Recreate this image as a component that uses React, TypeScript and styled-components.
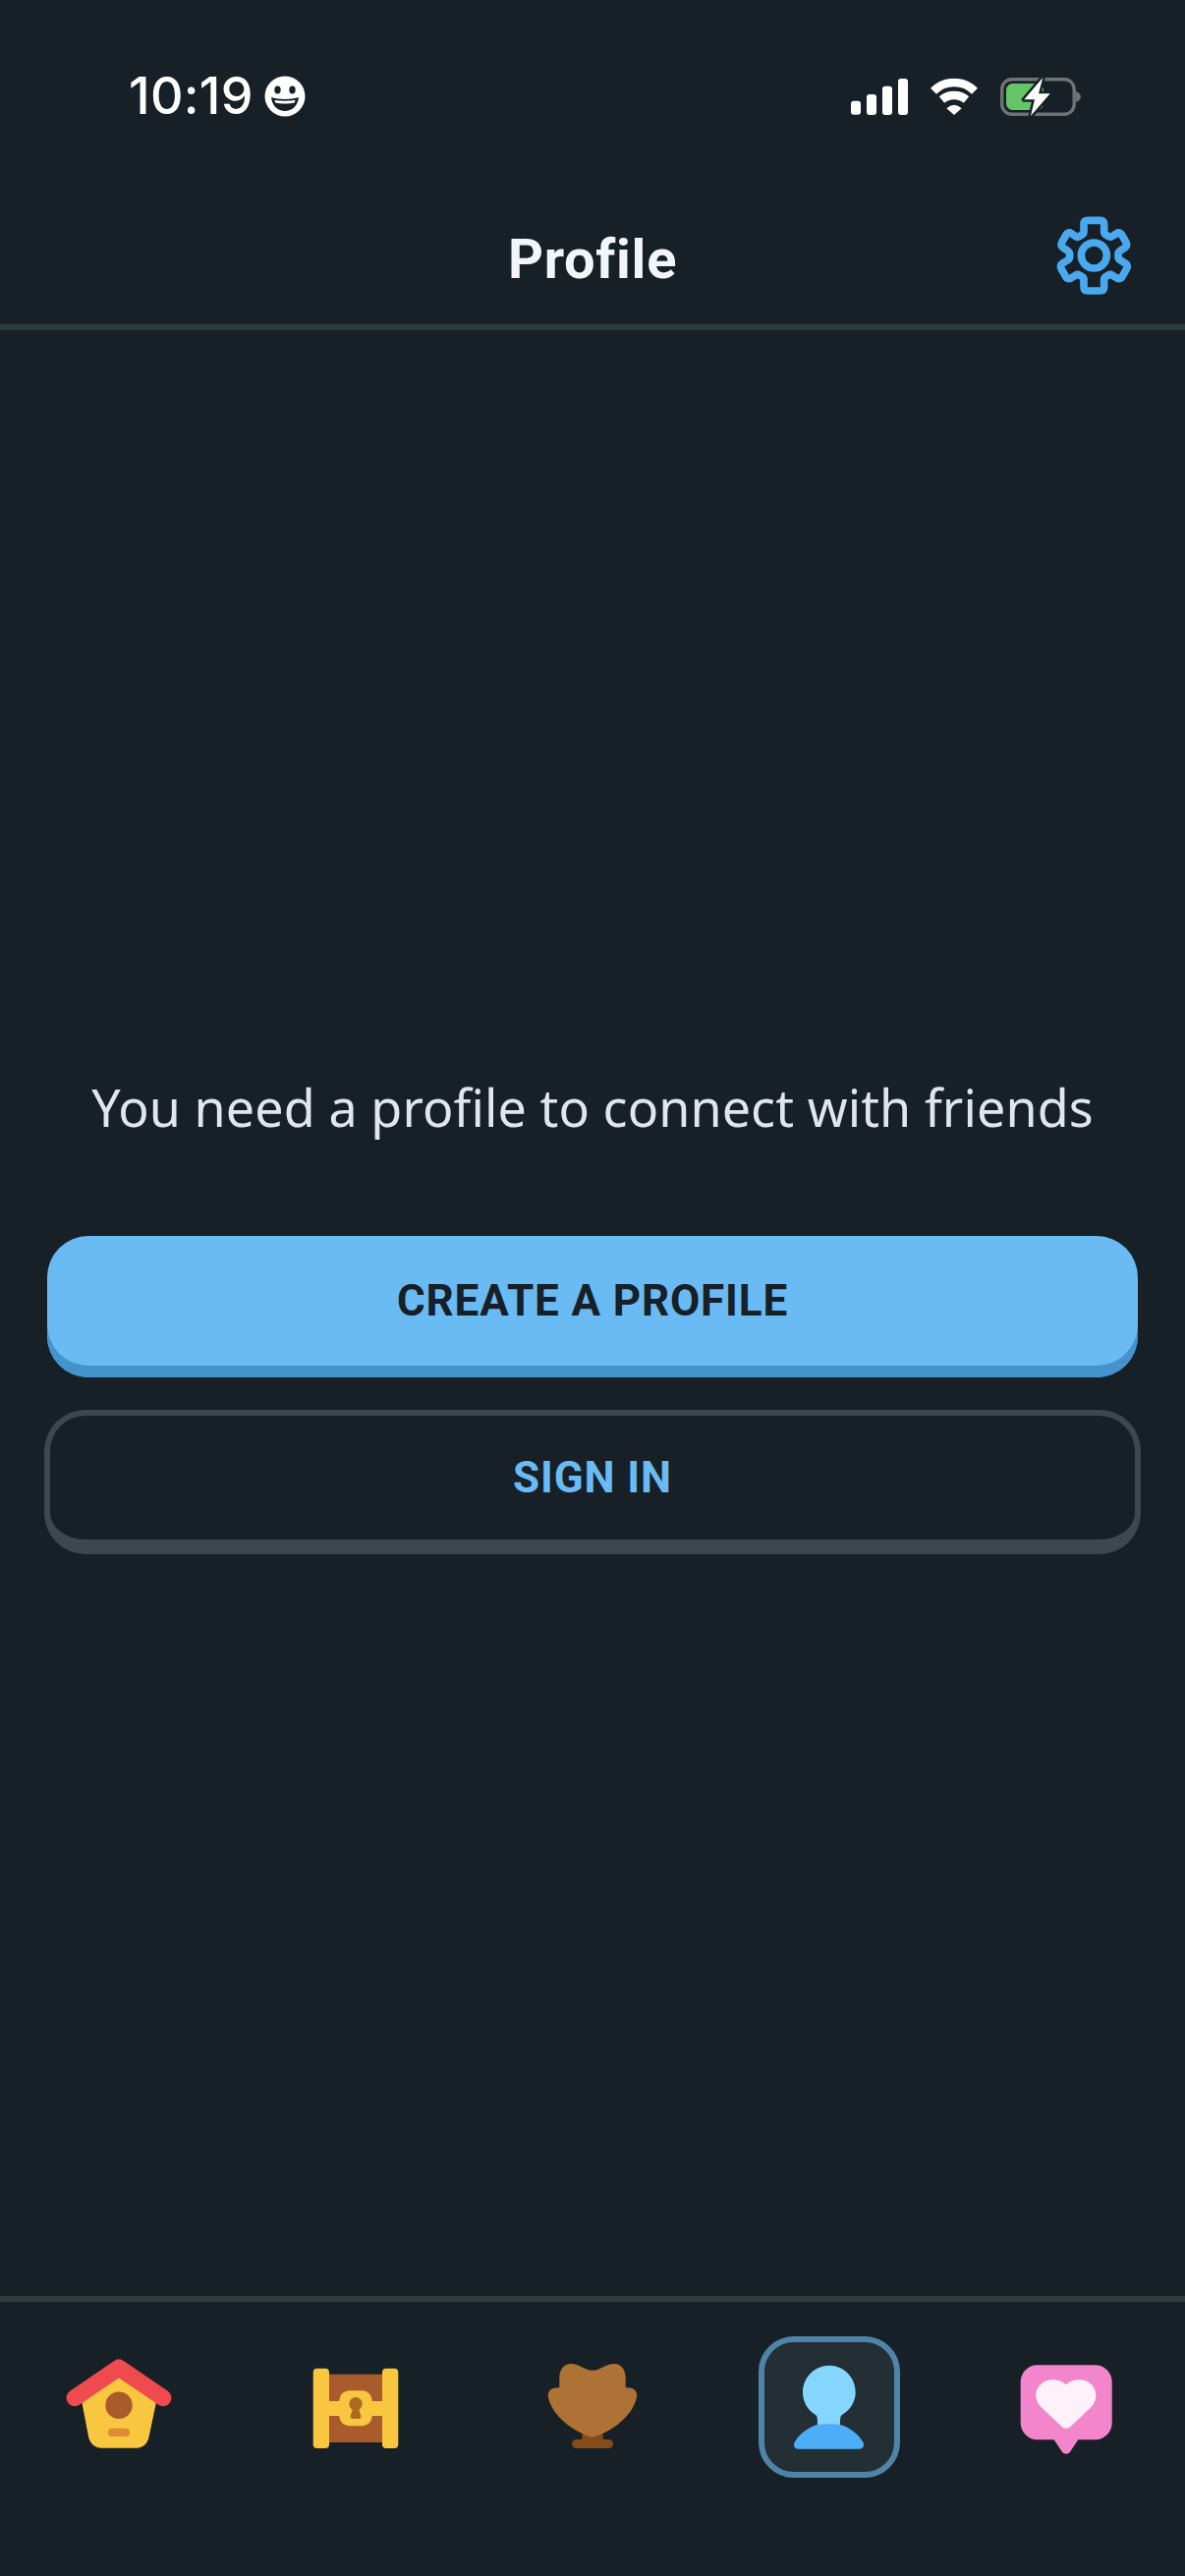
import styled, { createGlobalStyle } from 'styled-components'

const GlobalStyle = createGlobalStyle`
  html, body {
    margin: 0;
    padding: 0;
    background: #172027;
  }
`

export default function App() {
  return (
    <>
      <GlobalStyle />
      <Screen>
        <StatusBar>
          <Clock>
            <Time>10:19</Time>
            <svg width="42" height="42" viewBox="0 0 42 42">
              <circle cx="21" cy="21" r="20.5" fill="#fff" />
              <ellipse cx="13.5" cy="14.5" rx="3.2" ry="4" fill="#172027" />
              <ellipse cx="28.5" cy="14.5" rx="3.2" ry="4" fill="#172027" />
              <path d="M7 22 C14 24.5 28 24.5 35 22 C34 31 28 36 21 36 C14 36 8 31 7 22 Z" fill="#172027" />
              <path d="M10.5 24.8 C16 26 26 26 31.5 24.8 L30.8 27.5 C25 28.8 17 28.8 11.2 27.5 Z" fill="#fff" />
            </svg>
          </Clock>
          <StatusIcons>
            <svg width="58" height="37" viewBox="0 0 58 37" fill="#fff">
              <rect x="0" y="22.7" width="10" height="14" rx="3" />
              <rect x="16" y="16" width="10" height="21" rx="3" />
              <rect x="32" y="7.7" width="10" height="29.3" rx="3" />
              <rect x="48" y="0" width="10" height="37" rx="3" />
            </svg>
            <svg width="50" height="37" viewBox="0 0 50 37">
              <path d="M4 12.7 A29.7 29.7 0 0 1 46 12.7" fill="none" stroke="#fff" strokeWidth="8.4" />
              <path d="M12.5 21.5 A19.6 19.6 0 0 1 37.5 21.5" fill="none" stroke="#fff" strokeWidth="8.4" />
              <path d="M17.3 30.3 Q25 23 32.7 30.3 L25 37 Z" fill="#fff" />
            </svg>
            <svg width="82" height="39" viewBox="0 0 82 39">
              <rect x="1.7" y="1.7" width="73.5" height="35.6" rx="10" fill="none" stroke="#6e7376" strokeWidth="3.4" />
              <path d="M77 14 C80 15 82 17 82 19.5 C82 22 80 24 77 25 Z" fill="#6e7376" />
              <rect x="6" y="6" width="38" height="27" rx="6.5" fill="#65c466" />
              <path d="M43.3 0 L24.3 22.3 L35 22.3 L31 39 L50.7 16.3 L39 16.3 Z" fill="#fff" stroke="#172027" strokeWidth="5" strokeLinejoin="round" paintOrder="stroke" />
            </svg>
          </StatusIcons>
        </StatusBar>
        <Header>
          <span />
          <Title>Profile</Title>
          <SettingsButton>
            <svg width="80" height="84" viewBox="0 0 240 252" fill="none" stroke="#4aa9ee" strokeWidth="23" strokeLinejoin="round">
              <path d="M104 16 H140 C148 16 152 20 152 28 V50 C152 54 154 58 158 60 L166 65 C169 67 173 67 176 65 L190 56 C196 52 203 54 206 60 L219 83 C222 89 221 95 216 99 L202 108 C198 111 195 114 195 118 V128 C195 132 198 135 202 138 L218 148 C223 151 224 158 221 163 L207 188 C204 194 197 196 191 192 L176 183 C173 181 169 181 166 183 L158 187 C154 189 152 193 152 197 V219 C152 227 148 231 140 231 H102 C94 231 90 227 90 219 V197 C90 193 88 189 84 187 L76 183 C73 181 69 181 66 183 L51 192 C45 196 38 194 35 188 L21 163 C18 158 19 151 24 148 L40 138 C44 135 47 132 47 128 V118 C47 114 44 111 40 108 L26 99 C21 95 20 89 23 83 L36 60 C39 54 46 52 52 56 L66 65 C69 67 73 67 76 65 L84 60 C88 58 90 54 90 50 V28 C90 20 94 16 102 16 Z" />
              <circle cx="121" cy="123" r="39" />
            </svg>
          </SettingsButton>
        </Header>
        <Content>
          <Message>You need a profile to connect with friends</Message>
          <PrimaryButton>CREATE A PROFILE</PrimaryButton>
          <SecondaryButton>SIGN IN</SecondaryButton>
        </Content>
        <TabBar>
          <Tab>
            <svg width="132" height="132" viewBox="6 6 132 132">
              <path d="M72 42 L34.3 67 L41 102 C42.5 109 47 113.7 54.3 113.7 H89.7 C97 113.7 101.2 109 102.7 102 L110 67 Z" fill="#f8c63f" />
              <circle cx="72" cy="70.3" r="13.7" fill="#aa5b2b" />
              <rect x="61" y="93.7" width="22" height="8.3" rx="4.1" fill="#dd8c33" />
              <path d="M27 62.7 L72 32 L117 62.7" fill="none" stroke="#ef4b4f" strokeWidth="17" strokeLinecap="round" strokeLinejoin="round" />
            </svg>
          </Tab>
          <Tab>
            <svg width="132" height="132" viewBox="6 6 132 132">
              <rect x="45" y="38.7" width="54" height="69.3" fill="#aa5b2b" />
              <rect x="28.7" y="32.7" width="16.3" height="81.3" rx="4" fill="#f8c63f" />
              <rect x="99" y="32.7" width="16.3" height="81.3" rx="4" fill="#f8c63f" />
              <rect x="45" y="66" width="54" height="15" fill="#f8c63f" />
              <rect x="55.3" y="55.3" width="33.4" height="36" rx="10" fill="#f8c63f" />
              <circle cx="72" cy="68.7" r="6.7" fill="#ad6a1f" />
              <path d="M69.5 72 L66.7 81 C66.3 83 67.2 84 69 84 H75 C76.8 84 77.7 83 77.3 81 L74.5 72 Z" fill="#ad6a1f" />
            </svg>
          </Tab>
          <Tab>
            <svg width="132" height="132" viewBox="6 6 132 132">
              <path d="M61.7 98 L72 90 L82.3 98 L83 105 H61 Z" fill="#834c18" />
              <rect x="51" y="105" width="42" height="9" rx="4.5" fill="#834c18" />
              <path d="M72 34.7 C64 34.7 58 28 50 28 C43 28 38.3 34 38.3 42 V52 L33 52.7 C29 53 26 57 27 62 C31 82 54 98 72 102.7 C90 98 113 82 117 62 C118 57 115 53 111 52.7 L105.7 52 V42 C105.7 34 101 28 94 28 C86 28 80 34.7 72 34.7 Z" fill="#ae7136" />
            </svg>
          </Tab>
          <Tab $active>
            <svg width="132" height="132" viewBox="6 6 132 132">
              <path d="M45 57 C45 42 57 29.7 72 29.7 C87 29.7 98.7 42 98.7 57 C98.7 67 93 75 85 80 C83 81.5 83 84 83 90 H60 C60 84 60 81.5 58 80 C50 75 45 67 45 57 Z" fill="#84d6ff" />
              <path d="M60 90 C64 89 79 89 83 90 C92 92 102 100 106.5 108 C108 111 106.5 114.7 103 114.7 H40 C36.5 114.7 35 111 36.5 108 C41 100 51 92 60 90 Z" fill="#4baef7" />
            </svg>
          </Tab>
          <Tab>
            <svg width="132" height="132" viewBox="6 6 132 132">
              <path d="M42.7 29.3 H101.7 C111 29.3 118.7 37 118.7 46.3 V88.3 C118.7 97.6 111 105.3 101.7 105.3 H84.3 L76.5 117 C74.5 120.5 69.5 120.5 67.5 117 L59.7 105.3 H42.7 C33.4 105.3 25.7 97.6 25.7 88.3 V46.3 C25.7 37 33.4 29.3 42.7 29.3 Z" fill="#f285cb" />
              <path d="M72 49.3 C76 45.5 81 44.3 86 44.3 C95.5 44.3 102.3 51.5 102.3 60 C102.3 65.5 100 69.5 96.5 73 L77 91.5 C74 94.4 70 94.4 67 91.5 L47.5 73 C44 69.5 41.3 65.5 41.3 60 C41.3 51.5 48.5 44.3 58 44.3 C63 44.3 68 45.5 72 49.3 Z" fill="#fdf1fa" />
            </svg>
          </Tab>
        </TabBar>
      </Screen>
    </>
  )
}

const Screen = styled.div`
  display: flex;
  flex-direction: column;
  width: 1206px;
  height: 2622px;
  background: #172027;
  overflow: hidden;
`

const StatusBar = styled.div`
  display: flex;
  align-items: center;
  justify-content: space-between;
  height: 196px;
  padding: 0 106px 0 131px;
  box-sizing: border-box;
`

const Clock = styled.div`
  display: flex;
  align-items: center;
  gap: 11px;
`

const Time = styled.span`
  font-family: 'Inter', 'Liberation Sans', sans-serif;
  font-size: 52px;
  font-weight: 500;
  line-height: 1;
  letter-spacing: 0.3px;
  color: #fff;
`

const StatusIcons = styled.div`
  display: flex;
  align-items: center;
  gap: 22px;
`

const Header = styled.header`
  display: grid;
  grid-template-columns: 1fr auto 1fr;
  align-items: center;
  height: 140px;
  padding: 0 53px 4px;
  box-sizing: border-box;
  border-bottom: 6px solid #2d3a3e;
`

const Title = styled.h1`
  margin: 6px 0 0;
  font-family: 'Roboto', 'Liberation Sans', sans-serif;
  font-size: 56px;
  font-weight: 700;
  letter-spacing: 0.7px;
  color: #f2f5f9;
`

const SettingsButton = styled.div`
  display: flex;
  justify-self: end;
`

const Content = styled.main`
  flex: 1;
  display: flex;
  flex-direction: column;
  align-items: center;
  justify-content: center;
  padding: 0 45px;
`

const Message = styled.p`
  margin: 0 0 96px;
  font-family: 'Noto Sans', 'Liberation Sans', sans-serif;
  font-size: 52px;
  font-weight: 400;
  line-height: 70px;
  letter-spacing: 0.1px;
  color: #dfe6ee;
  white-space: nowrap;
`

const ButtonBase = styled.button`
  display: flex;
  align-items: center;
  justify-content: center;
  font-family: 'Roboto', 'Liberation Sans', sans-serif;
  font-size: 44px;
  font-weight: 700;
  letter-spacing: 0.85px;
  padding: 0;
`

const PrimaryButton = styled(ButtonBase)`
  width: 1110px;
  height: 144px;
  margin-bottom: 33px;
  padding-bottom: 12px;
  border: none;
  border-radius: 42px;
  background: #6abaf4;
  box-shadow: inset 0 -12px 0 #4593cd;
  color: #172027;
`

const SecondaryButton = styled(ButtonBase)`
  width: 1116px;
  height: 147px;
  border: 6px solid #3c474f;
  border-bottom-width: 15px;
  border-radius: 42px;
  background: transparent;
  color: #6abaf4;
`

const TabBar = styled.nav`
  display: grid;
  grid-template-columns: repeat(5, 1fr);
  justify-items: center;
  height: 285px;
  padding-top: 35px;
  box-sizing: border-box;
  border-top: 6px solid #2d3a3e;
`

const Tab = styled.div<{ $active?: boolean }>`
  display: flex;
  align-items: center;
  justify-content: center;
  width: 144px;
  height: 144px;
  box-sizing: border-box;
  border-radius: 36px;
  border: 6px solid ${({ $active }) => ($active ? '#4f83a8' : 'transparent')};
  background: ${({ $active }) => ($active ? '#232e35' : 'transparent')};
`
